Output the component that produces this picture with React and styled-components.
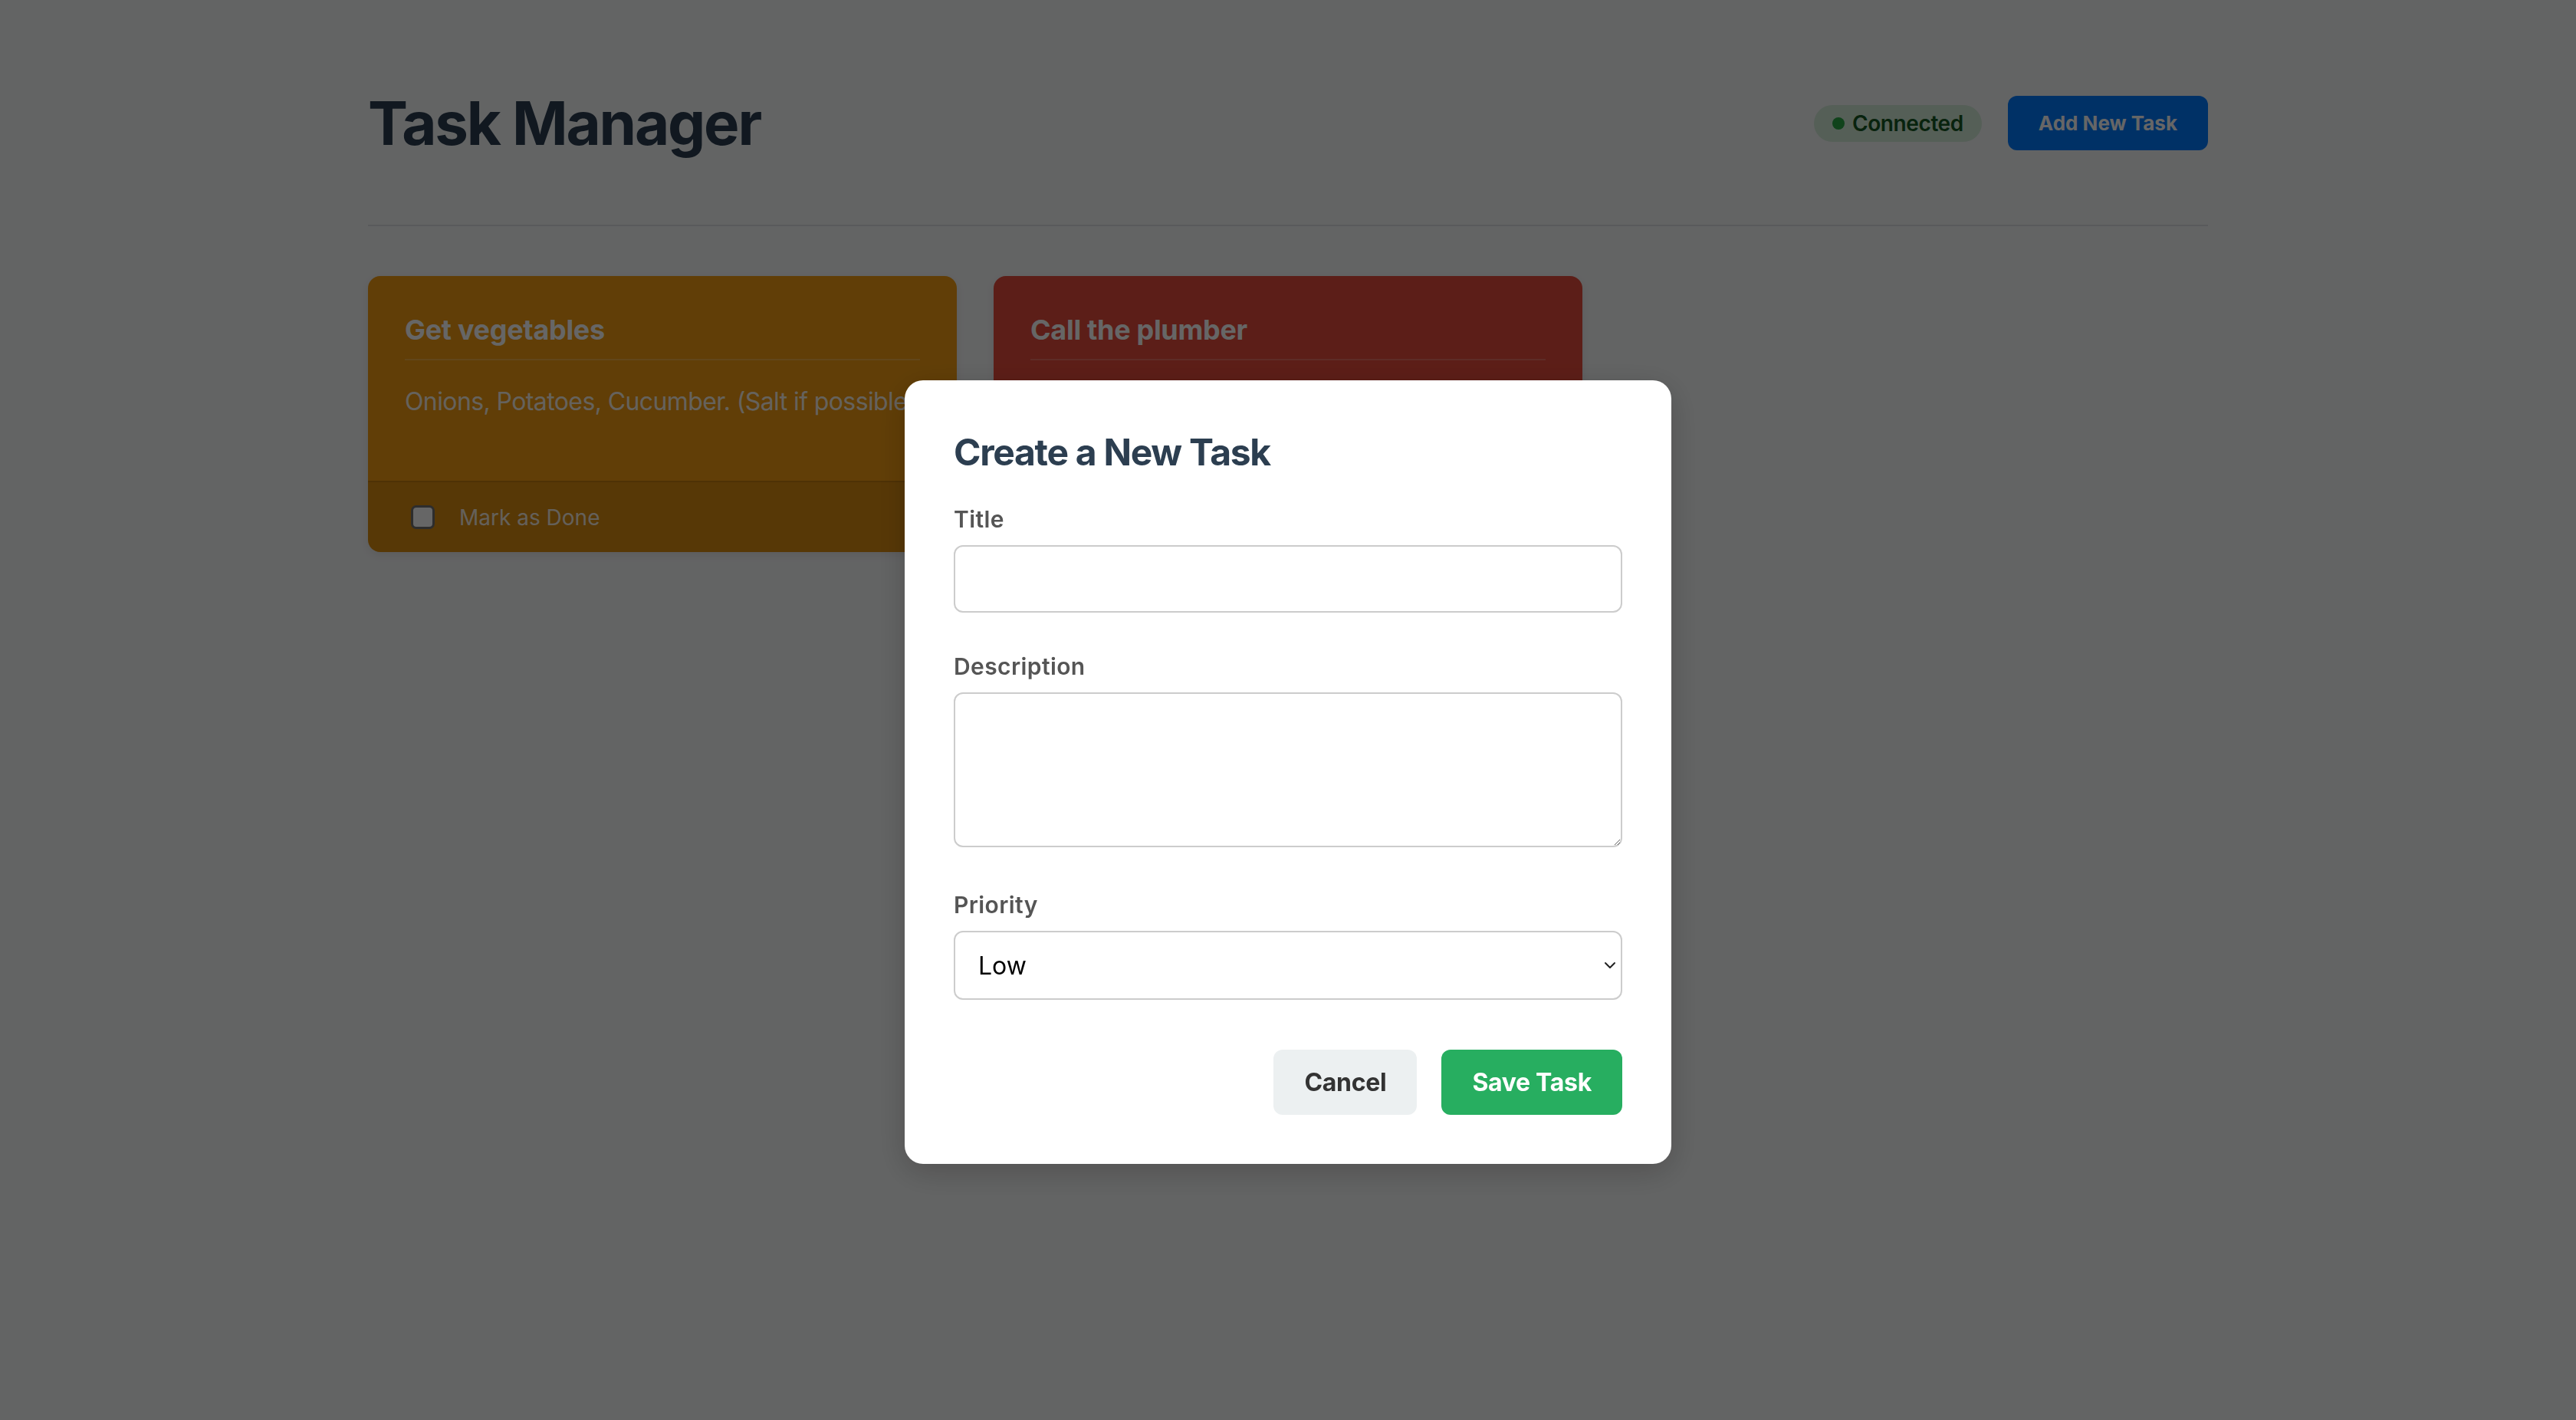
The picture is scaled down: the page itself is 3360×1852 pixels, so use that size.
import styled, { createGlobalStyle } from "styled-components"

const GlobalStyle = createGlobalStyle`
*{
    box-sizing: border-box;
}
body{
    margin: 0;
    background: #f8f9fa;
    font-family: Inter, "Noto Sans", sans-serif;
    color: #2c3e50;
}
`

const tasks = [
    { id: 1, title: "Get vegetables", description: "Onions, Potatoes, Cucumber. (Salt if possible)", color: "#f39c12" },
    { id: 2, title: "Call the plumber", description: "Kitchen sink is leaking again.", color: "#e74c3c" },
]

const TaskCard = props => {
    const { task } = props
    return(
        <Card $color={task.color}>
            <CardBody>
                <CardTitle>{task.title}</CardTitle>
                <CardText>{task.description}</CardText>
            </CardBody>
            <CardFooter>
                <Check type="checkbox" />
                <span>Mark as Done</span>
            </CardFooter>
        </Card>
    )
}

const App = () => {
    return(
        <>
            <GlobalStyle />
            <Page>
                <Header>
                    <Title>Task Manager</Title>
                    <Actions>
                        <Status><Dot />Connected</Status>
                        <PrimaryButton>Add New Task</PrimaryButton>
                    </Actions>
                </Header>
                <Grid>
                    {tasks.map(task => <TaskCard key={task.id} task={task} />)}
                </Grid>
            </Page>
            <Overlay>
                <Modal>
                    <ModalTitle>Create a New Task</ModalTitle>
                    <FormGroup $gap={52}>
                        <Label>Title</Label>
                        <Input type="text" />
                    </FormGroup>
                    <FormGroup $gap={57}>
                        <Label>Description</Label>
                        <TextArea />
                    </FormGroup>
                    <FormGroup $gap={65}>
                        <Label>Priority</Label>
                        <SelectWrap>
                            <Select defaultValue="low">
                                <option value="low">Low</option>
                                <option value="medium">Medium</option>
                                <option value="high">High</option>
                            </Select>
                            <Chevron width="16" height="10" viewBox="0 0 16 10">
                                <path d="M2 2 L8 8 L14 2" fill="none" stroke="#222" strokeWidth="2" strokeLinecap="round" strokeLinejoin="round" />
                            </Chevron>
                        </SelectWrap>
                    </FormGroup>
                    <ModalActions>
                        <Button $bg="#ecf0f1" $fg="#333">Cancel</Button>
                        <Button $bg="#27ae60" $fg="#fff">Save Task</Button>
                    </ModalActions>
                </Modal>
            </Overlay>
        </>
    )
}

const Page = styled.div`
max-width: 2400px;
margin: 0 auto;
padding: 64px 0;
`
const Header = styled.header`
display: flex;
align-items: center;
justify-content: space-between;
padding: 49px 0 85px;
border-bottom: 2px solid #dee2e6;
`
const Title = styled.h1`
margin: 0;
font-size: 78px;
font-weight: 700;
letter-spacing: -2.2px;
color: #2c3e50;
`
const Actions = styled.div`
display: flex;
align-items: center;
gap: 34px;
`
const Status = styled.div`
display: flex;
align-items: center;
gap: 10px;
height: 48px;
padding: 0 24px;
border-radius: 24px;
background: #d4edda;
color: #155724;
font-size: 28px;
font-weight: 600;
letter-spacing: -0.4px;
`
const Dot = styled.span`
width: 16px;
height: 16px;
border-radius: 50%;
background: #28a745;
`
const PrimaryButton = styled.button`
height: 71px;
padding: 0 40px;
border: none;
border-radius: 12px;
background: #007bff;
color: #fff;
font-family: inherit;
font-size: 26px;
font-weight: 700;
`
const Grid = styled.div`
display: grid;
grid-template-columns: repeat(3, 1fr);
gap: 48px;
margin-top: 65px;
`
const Card = styled.div`
display: flex;
flex-direction: column;
height: 360px;
border-radius: 16px;
overflow: hidden;
background: ${props => props.$color};
color: #fff;
box-shadow: 0 4px 12px rgba(0,0,0,0.08);
`
const CardBody = styled.div`
flex: 1;
padding: 48px 48px 0;
`
const CardTitle = styled.h3`
margin: 0;
padding-bottom: 16px;
border-bottom: 2px solid rgba(255,255,255,0.2);
font-size: 36px;
font-weight: 700;
letter-spacing: -0.3px;
`
const CardText = styled.p`
margin: 34px 0 0;
font-size: 32px;
letter-spacing: -0.6px;
white-space: nowrap;
color: rgba(255,255,255,0.92);
`
const CardFooter = styled.label`
display: flex;
align-items: center;
gap: 32px;
height: 93px;
padding: 0 56px;
border-top: 2px solid rgba(0,0,0,0.1);
background: rgba(0,0,0,0.1);
font-size: 28px;
color: rgba(255,255,255,0.9);
`
const Check = styled.input`
appearance: none;
margin: 0;
width: 31px;
height: 31px;
border: 3px solid #707070;
border-radius: 7px;
background: #fff;
`
const Overlay = styled.div`
position: fixed;
inset: 0;
display: flex;
justify-content: center;
align-items: center;
padding-top: 162px;
background: rgba(0,0,0,0.6);
`
const Modal = styled.div`
width: 1000px;
padding: 64px;
border-radius: 24px;
background: #fff;
box-shadow: 0 10px 40px rgba(0,0,0,0.2);
`
const ModalTitle = styled.h2`
margin: 0 0 40px;
font-size: 48px;
font-weight: 700;
letter-spacing: -1.3px;
color: #2c3e50;
`
const FormGroup = styled.div`
margin-bottom: ${props => props.$gap}px;
`
const Label = styled.label`
display: block;
margin-bottom: 16px;
font-size: 30px;
font-weight: 600;
letter-spacing: 0.4px;
color: #555;
`
const fieldStyles = `
display: block;
width: 100%;
border: 2px solid #ccc;
border-radius: 12px;
background: #fff;
font-family: inherit;
font-size: 32px;
color: #000;
`
const Input = styled.input`
${fieldStyles}
height: 88px;
padding: 0 30px;
`
const TextArea = styled.textarea`
${fieldStyles}
height: 202px;
padding: 20px 30px;
resize: vertical;
`
const SelectWrap = styled.div`
position: relative;
`
const Select = styled.select`
${fieldStyles}
appearance: none;
height: 90px;
padding: 0 30px;
`
const Chevron = styled.svg`
position: absolute;
right: 8px;
top: 40px;
pointer-events: none;
`
const ModalActions = styled.div`
display: flex;
justify-content: flex-end;
gap: 32px;
`
const Button = styled.button`
height: 85px;
padding: 0 40px;
border: none;
border-radius: 12px;
background: ${props => props.$bg};
color: ${props => props.$fg};
font-family: inherit;
font-size: 32px;
font-weight: 700;
letter-spacing: -0.3px;
`

export default App
